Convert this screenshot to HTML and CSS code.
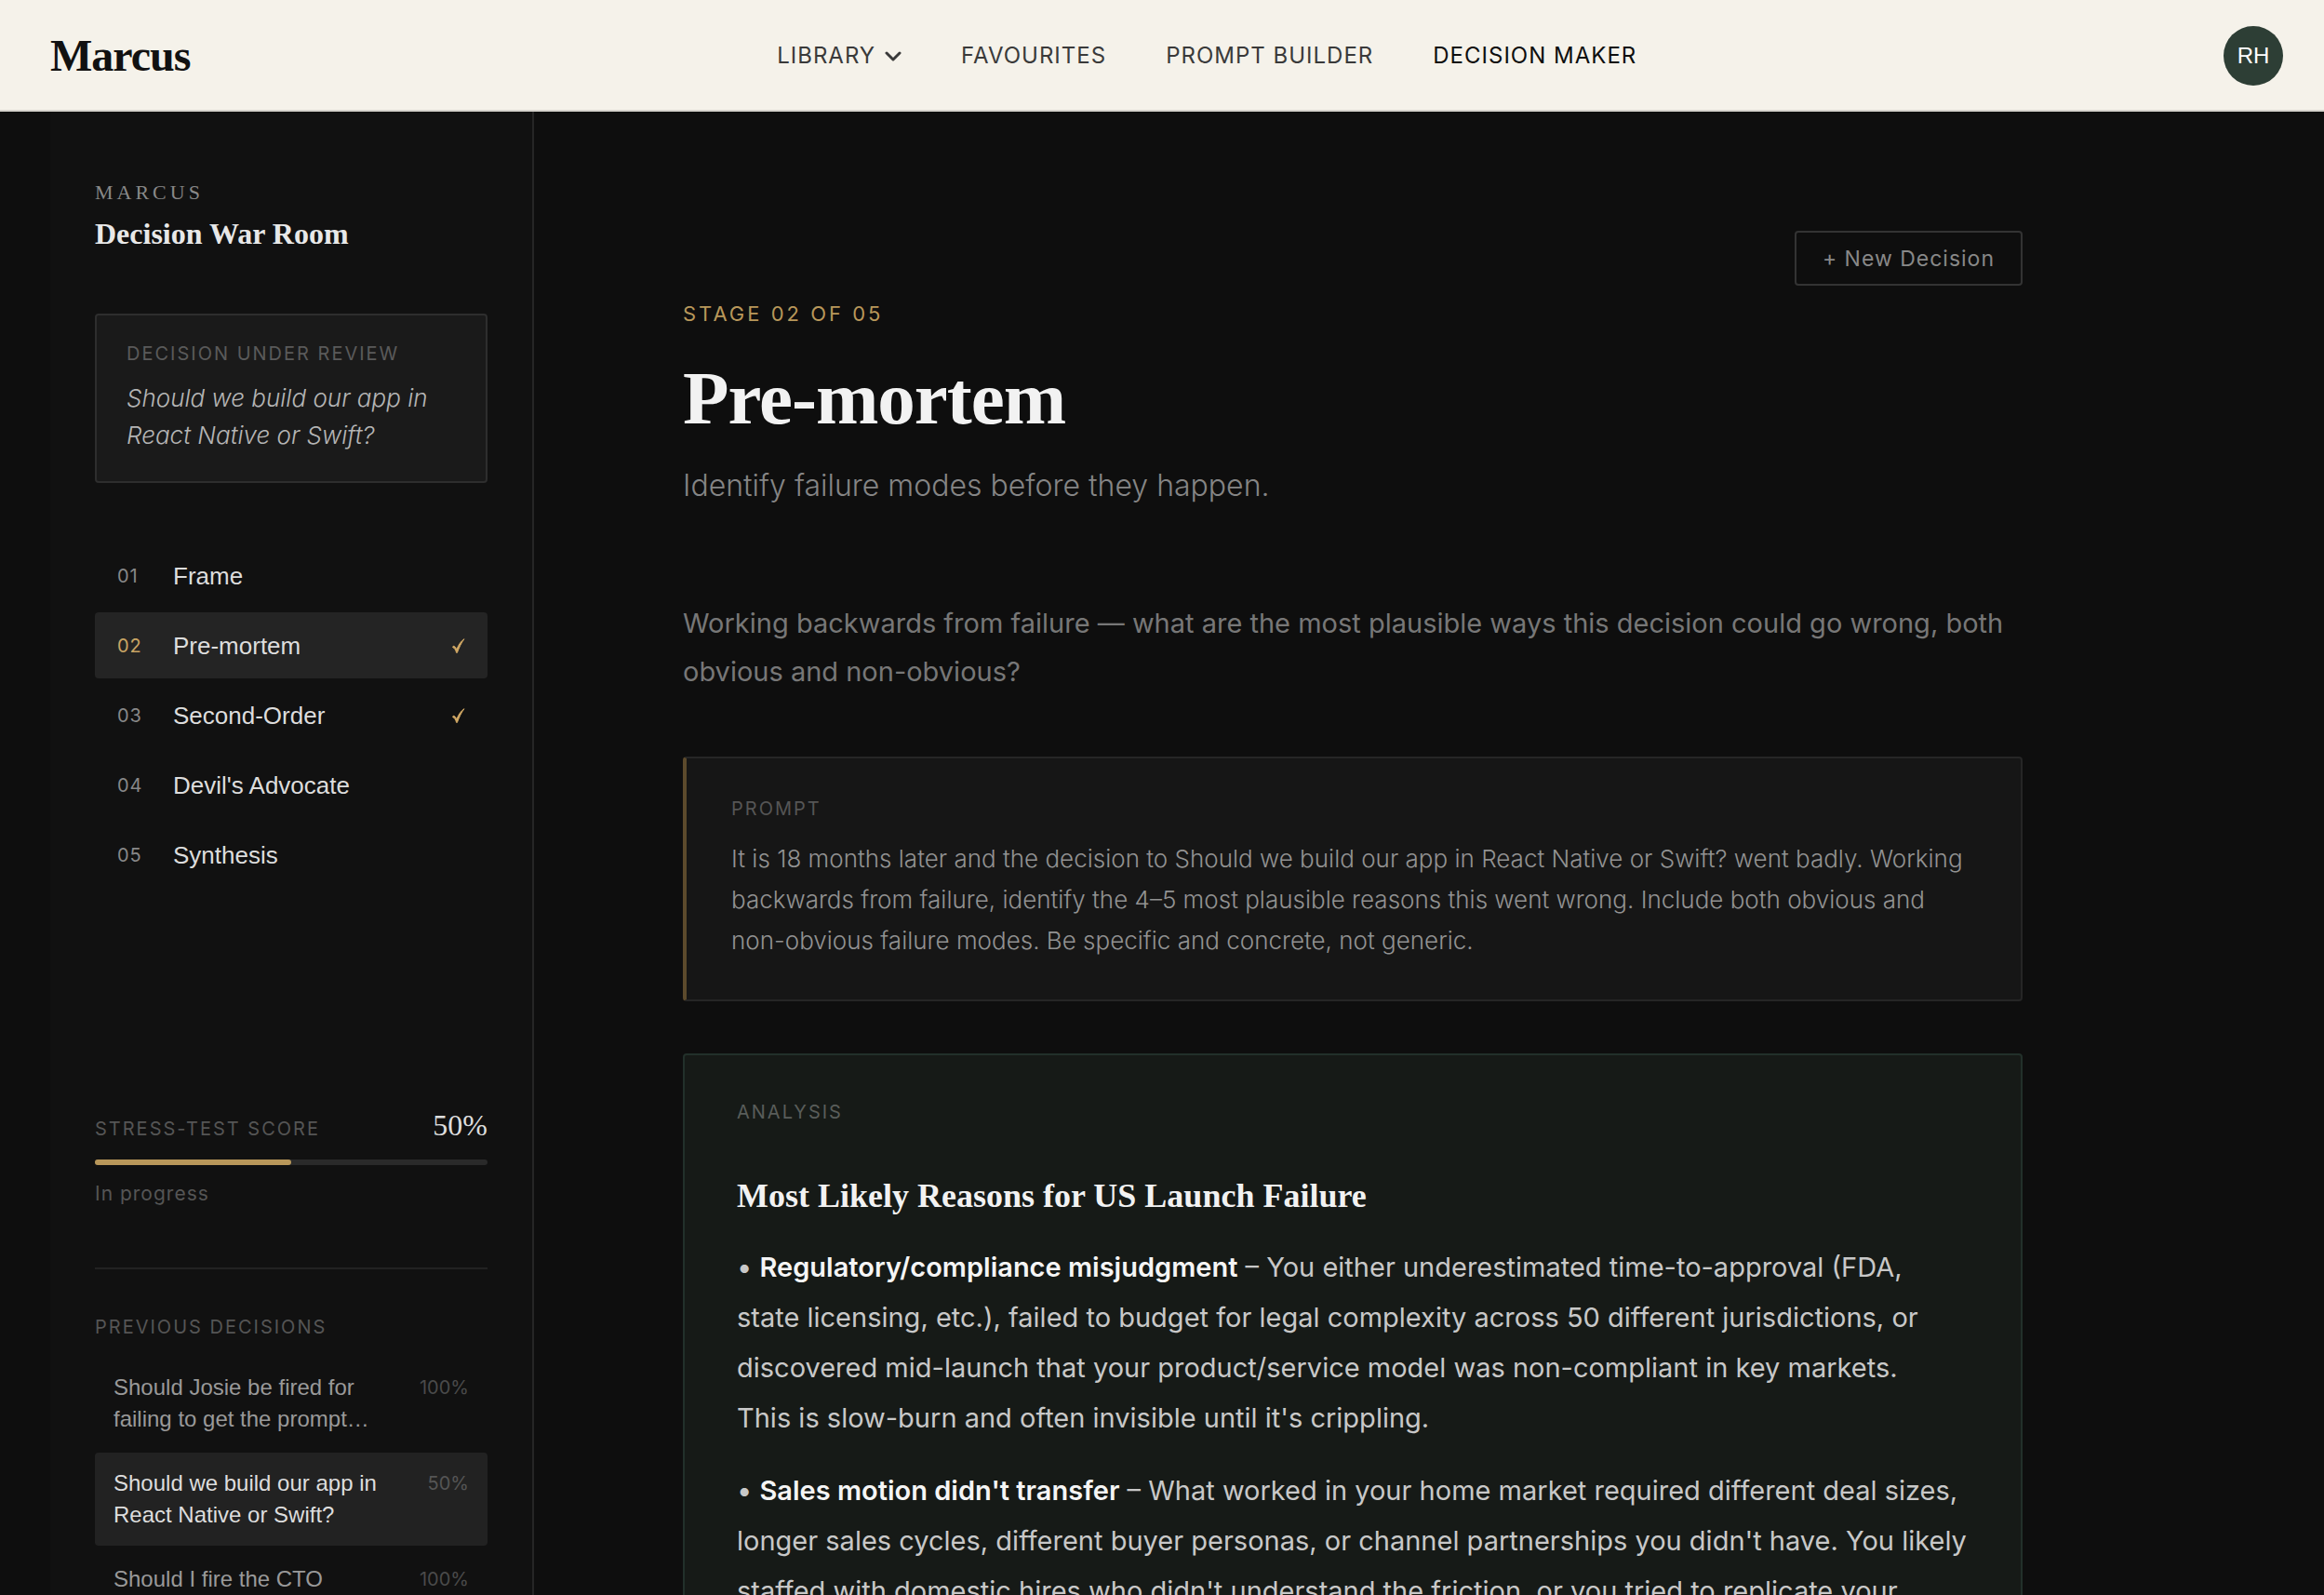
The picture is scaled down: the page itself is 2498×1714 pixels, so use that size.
FILE: index.html
```html
<!DOCTYPE html>
<html lang="en">
<head>
  <meta charset="utf-8">
  <meta name="viewport" content="width=device-width, initial-scale=1">
  <title>Marcus – Decision Maker</title>
  <link rel="stylesheet" href="styles.css">
</head>
<body>
  <header class="topbar">
    <a class="logo" href="#">Marcus</a>
    <nav class="topnav" aria-label="Primary">
      <button class="topnav-item topnav-menu" type="button">LIBRARY
        <svg class="chevron" viewBox="0 0 18 11" aria-hidden="true"><path d="M2 2l7 7 7-7"/></svg>
      </button>
      <a class="topnav-item" href="#">FAVOURITES</a>
      <a class="topnav-item" href="#">PROMPT BUILDER</a>
      <a class="topnav-item is-active" href="#" aria-current="page">DECISION MAKER</a>
    </nav>
    <button class="avatar" type="button" aria-label="Account, RH">RH</button>
  </header>

  <div class="layout">
    <aside class="sidebar">
      <p class="brand">MARCUS</p>
      <h2 class="room-title">Decision War Room</h2>

      <section class="review">
        <h3 class="label">DECISION UNDER REVIEW</h3>
        <p class="review-text">Should we build our app in React Native or Swift?</p>
      </section>

      <nav class="stages" aria-label="Stages">
        <button class="stage" type="button"><span class="stage-num">01</span><span class="stage-name">Frame</span></button>
        <button class="stage is-active" type="button"><span class="stage-num">02</span><span class="stage-name">Pre-mortem</span>
          <svg class="check" viewBox="0 0 14 16" aria-label="Done"><path d="M1.200 8.300C2.600 8.200 4 9.800 4.900 12 6.500 7.400 9.200 3.200 13 .7 9.700 4.700 7.600 9.600 5.400 15.400H4.600C3.800 12.600 2.500 10.200.6 9.600Z"/></svg>
        </button>
        <button class="stage" type="button"><span class="stage-num">03</span><span class="stage-name">Second-Order</span>
          <svg class="check" viewBox="0 0 14 16" aria-label="Done"><path d="M1.200 8.300C2.600 8.200 4 9.800 4.900 12 6.500 7.400 9.200 3.200 13 .7 9.700 4.700 7.600 9.600 5.400 15.400H4.600C3.800 12.600 2.500 10.200.6 9.600Z"/></svg>
        </button>
        <button class="stage" type="button"><span class="stage-num">04</span><span class="stage-name">Devil's Advocate</span></button>
        <button class="stage" type="button"><span class="stage-num">05</span><span class="stage-name">Synthesis</span></button>
      </nav>

      <section class="score">
        <div class="score-head">
          <h3 class="label">STRESS-TEST SCORE</h3>
          <span class="score-value">50%</span>
        </div>
        <div class="bar"><div class="bar-fill" style="width: 50%"></div></div>
        <p class="score-note">In progress</p>
      </section>

      <section class="history">
        <h3 class="label">PREVIOUS DECISIONS</h3>
        <div class="history-list">
          <button class="past" type="button"><span class="past-title">Should Josie be fired for failing to get the prompt…</span><span class="past-score">100%</span></button>
          <button class="past is-active" type="button"><span class="past-title">Should we build our app in React Native or Swift?</span><span class="past-score">50%</span></button>
          <button class="past" type="button"><span class="past-title">Should I fire the CTO</span><span class="past-score">100%</span></button>
        </div>
      </section>
    </aside>

    <main class="main">
      <div class="content">
        <div class="actions"><button class="new-decision" type="button">+ New Decision</button></div>
        <p class="stage-tag">STAGE 02 OF 05</p>
        <h1 class="title">Pre-mortem</h1>
        <p class="subtitle">Identify failure modes before they happen.</p>
        <p class="intro">Working backwards from failure — what are the most plausible ways this decision could go wrong, both obvious and non-obvious?</p>

        <section class="prompt">
          <h2 class="label">PROMPT</h2>
          <p class="prompt-text">It is 18 months later and the decision to Should we build our app in React Native or Swift? went badly. Working backwards from failure, identify the 4–5 most plausible reasons this went wrong. Include both obvious and non-obvious failure modes. Be specific and concrete, not generic.</p>
        </section>

        <section class="analysis">
          <h2 class="label">ANALYSIS</h2>
          <h3 class="analysis-title">Most Likely Reasons for US Launch Failure</h3>
          <p class="analysis-text">• <strong>Regulatory/compliance misjudgment</strong> – You either underestimated time-to-approval (FDA, state licensing, etc.), failed to budget for legal complexity across 50 different jurisdictions, or discovered mid-launch that your product/service model was non-compliant in key markets. This&nbsp;is slow-burn and often invisible until it's crippling.</p>
          <p class="analysis-text">• <strong>Sales motion didn't transfer</strong> – What worked in your home market required different deal sizes, longer sales cycles, different buyer personas, or channel partnerships you didn't have. You likely staffed with domestic hires who didn't understand the friction, or you tried to replicate your</p>
        </section>
      </div>
    </main>
  </div>
</body>
</html>
```
FILE: styles.css
```css
:root {
  --sans: Inter, "Liberation Sans", sans-serif;
  --ui: "Liberation Sans", Arial, sans-serif;
  --serif: "Liberation Serif", "Times New Roman", serif;
  --gold: #b8975a;
  --line: #262626;
}

* { box-sizing: border-box; margin: 0; padding: 0; }

body {
  display: flex;
  flex-direction: column;
  height: 100vh;
  overflow: hidden;
  background: #0e0e0e;
  font-family: var(--sans);
}

button { border: 0; background: none; color: inherit; font: inherit; text-align: left; cursor: pointer; }
a { color: inherit; text-decoration: none; }

/* Top bar */
.topbar {
  flex: none;
  display: flex;
  align-items: center;
  justify-content: space-between;
  height: 120px;
  padding: 2px 44px 0 54px;
  background: #f5f2ea;
  border-bottom: 2px solid #d6d3cd;
}
.logo { color: #111; font: bold 48px/56px var(--serif); letter-spacing: -1px; }
.topnav { display: flex; align-items: center; gap: 64px; }
.topnav-item { color: #3a3a3a; font-size: 24px; line-height: 32px; letter-spacing: 1px; }
.topnav-item.is-active { color: #0e0e0e; }
.topnav-menu { display: flex; align-items: center; gap: 10px; }
.chevron { width: 18px; height: 11px; fill: none; stroke: #3a3a3a; stroke-width: 3; stroke-linecap: round; stroke-linejoin: round; }
.avatar {
  width: 64px;
  height: 64px;
  border-radius: 50%;
  background: #2d3e35;
  color: #fff;
  font: 24px/64px var(--ui);
  text-align: center;
}

/* Sidebar */
.layout { flex: 1; display: flex; min-height: 0; padding-left: 54px; }
.sidebar {
  flex: none;
  width: 520px;
  padding: 74px 48px 0;
  overflow: hidden;
  background: #111;
  border-right: 2px solid var(--line);
}
.brand { color: #888; font: 22px/26px var(--serif); letter-spacing: 4px; }
.room-title { margin-top: 12px; color: #e8e8e8; font: bold 32px/38px var(--serif); }
.label { color: #555; font-size: 20px; font-weight: 400; line-height: 24px; letter-spacing: 2px; }

.review { margin-top: 67px; padding: 29px 32px; background: #1a1a1a; border: 2px solid #2e2e2e; border-radius: 4px; }
.review .label { color: #5a5a5a; }
.review-text { margin-top: 16px; color: #b5b5b5; font-size: 26px; font-style: italic; font-weight: 300; line-height: 40px; }

.stages { display: flex; flex-direction: column; gap: 4px; margin-top: 64px; }
.stage { display: flex; align-items: center; height: 71px; padding: 0 24px; border-radius: 4px; }
.stage.is-active { background: #242424; }
.stage-num { width: 60px; color: #888; font-size: 20px; letter-spacing: 1px; }
.stage.is-active .stage-num { color: #c9a464; }
.stage-name { flex: 1; color: #ddd; font: 26px/32px var(--ui); }
.check { width: 14px; height: 16px; fill: #d2a965; stroke: #d2a965; stroke-width: 1; stroke-linejoin: round; overflow: visible; }

.score { margin-top: 236px; padding-bottom: 66px; border-bottom: 2px solid #222; }
.score-head { display: flex; align-items: baseline; justify-content: space-between; }
.score-value { color: #ddd; font: 32px/38px var(--serif); }
.bar { height: 6px; margin-top: 18px; border-radius: 3px; background: #2a2a2a; }
.bar-fill { height: 100%; border-radius: 3px; background: var(--gold); }
.score-note { margin-top: 18px; color: #555; font-size: 21px; line-height: 26px; letter-spacing: 1px; }

.history { margin-top: 50px; }
.history-list { display: flex; flex-direction: column; gap: 3px; margin-top: 20px; }
.past { display: flex; align-items: flex-start; justify-content: space-between; gap: 20px; padding: 16px 20px; border-radius: 4px; }
.past-title { color: #999; font: 24px/34px var(--ui); }
.past-score { color: #4a4a4a; font-size: 20px; line-height: 34px; }
.past.is-active { background: #222; }
.past.is-active .past-title { color: #ddd; }
.past.is-active .past-score { color: #555; }

/* Main column */
.main { flex: 1; min-width: 0; padding: 128px 160px 0; overflow: hidden; }
.content { max-width: 1440px; }
.actions { display: flex; justify-content: flex-end; }
.new-decision {
  height: 59px;
  padding: 0 28px;
  border: 2px solid #333;
  border-radius: 4px;
  color: #888;
  font-size: 23px;
  letter-spacing: 1px;
}
.stage-tag { margin-top: 17px; color: var(--gold); font-size: 22px; line-height: 26px; letter-spacing: 3px; }
.title { margin-top: 34px; color: #f2f2f2; font: bold 81px/88px var(--serif); letter-spacing: -1px; }
.subtitle { margin-top: 26px; color: #858585; font-size: 32px; font-weight: 300; line-height: 48px; }
.intro { margin-top: 98px; color: #777; font-size: 29px; line-height: 52px; }

.prompt {
  margin-top: 65px;
  padding: 42px 48px 41px;
  background: #161616;
  border: 2px solid var(--line);
  border-left: 4px solid #5c4a2c;
  border-radius: 4px;
}
.prompt-text { margin-top: 20px; color: #929292; font-size: 26px; font-weight: 300; line-height: 44px; }

.analysis {
  margin-top: 56px;
  padding: 49px 56px 56px;
  background: #161a17;
  border: 2px solid #22302a;
  border-radius: 4px;
}
.analysis .label { color: #595d5a; }
.analysis-title { margin-top: 56px; margin-bottom: 28px; color: #f2f2f2; font: bold 36px/44px var(--serif); }
.analysis-text { margin-bottom: 24px; color: #c8c8c8; font-size: 29px; line-height: 54px; }
.analysis-text strong { color: #f5f5f5; font-weight: 600; }
```
